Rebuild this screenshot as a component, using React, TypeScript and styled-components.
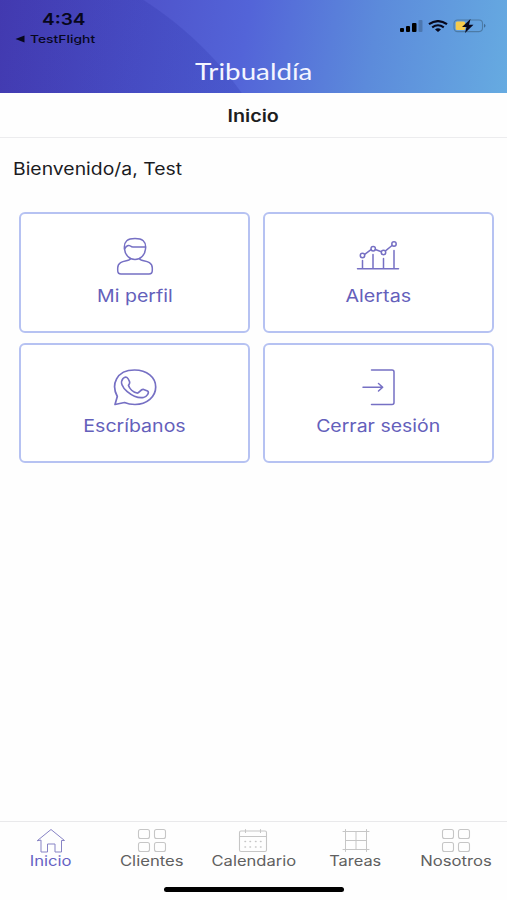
import React from "react";
import styled, { createGlobalStyle } from "styled-components";

const GlobalStyle = createGlobalStyle`
  * { box-sizing: border-box; }
  body { margin: 0; background: #fff; font-family: Inter, "Liberation Sans", sans-serif; }
`;

const Screen = styled.main`
  width: 507px;
  height: 900px;
  display: flex;
  flex-direction: column;
  background: #fefefe;
  overflow: hidden;
`;

const Header = styled.header`
  height: 93px;
  flex: none;
  display: flex;
  flex-direction: column;
  background:
    radial-gradient(circle 360px at -50px 303px, rgba(30, 36, 155, 0.18) 99.7%, transparent 100%),
    linear-gradient(100deg, #4a3eb4 0%, #4f54cb 28%, #5364d8 48%, #5c8bdb 73%, #66abe1 100%);
`;

const StatusBar = styled.div`
  height: 51px;
  display: flex;
  justify-content: space-between;
  padding: 9px 21px 0 15px;
  color: #07071c;
`;

const StatusLeft = styled.div`
  display: flex;
  flex-direction: column;
`;

const StatusIcons = styled.div`
  display: flex;
  align-items: center;
  gap: 5px;
  height: 34px;
`;

const Wide = styled.span<{ $scale?: number; $from?: string }>`
  display: inline-block;
  white-space: nowrap;
  transform: scaleX(${(p) => p.$scale ?? 1.2});
  transform-origin: ${(p) => p.$from ?? "center"};
`;

const Clock = styled.div`
  padding-left: 27px;
  font-size: 16px;
  line-height: 20px;
  font-weight: 600;
`;

const BackLink = styled.div`
  display: flex;
  align-items: center;
  gap: 5px;
  font-size: 11px;
  line-height: 20px;
  font-weight: 500;
`;

const AppTitle = styled.div`
  height: 40px;
  text-align: center;
  font-family: Lato, sans-serif;
  font-size: 23.5px;
  line-height: 40px;
  color: #f4f5ff;
`;

const PageTitle = styled.h1`
  margin: 0;
  height: 45px;
  flex: none;
  border-bottom: 1px solid #ececee;
  text-align: center;
  font-size: 17px;
  line-height: 46px;
  font-weight: 600;
  color: #1d1d20;
`;

const Welcome = styled.p`
  margin: 0;
  padding: 18px 0 0 13px;
  height: 74px;
  flex: none;
  font-size: 17px;
  line-height: 26px;
  color: #1b1b1f;
`;

const CardGrid = styled.section`
  display: grid;
  grid-template-columns: 231px 231px;
  grid-auto-rows: 120.5px;
  gap: 10px 12.5px;
  padding-left: 19px;
  flex: 1;
`;

const Card = styled.button`
  display: flex;
  flex-direction: column;
  align-items: center;
  padding: 20px 0 0;
  border: 2px solid #b6c2f2;
  border-radius: 6px;
  background: #fff;
  color: #6460bb;
  font: 400 17px/24px Inter, sans-serif;
  svg { margin-bottom: 5.5px; flex: none; color: #7670c4; }
`;

const TabBar = styled.nav`
  height: 54px;
  flex: none;
  display: grid;
  grid-template-columns: repeat(5, 101.4px);
  border-top: 1px solid #e9e9eb;
`;

const Tab = styled.a<{ $active?: boolean }>`
  display: flex;
  flex-direction: column;
  align-items: center;
  padding-top: 6px;
  font-size: 14px;
  line-height: 16px;
  font-weight: 400;
  color: ${(p) => (p.$active ? "#6562c4" : "#606060")};
  svg { color: ${(p) => (p.$active ? "#8783c5" : "#c6c6c6")}; flex: none; }
`;

const HomeArea = styled.footer`
  height: 25px;
  flex: none;
  display: flex;
  justify-content: center;
  padding: 12px 0 0 1px;
`;

const HomeIndicator = styled.div`
  width: 180px;
  height: 5px;
  border-radius: 3px;
  background: #000;
`;

const line = { fill: "none", stroke: "currentColor", strokeLinecap: "round", strokeLinejoin: "round" } as const;

const SignalIcon = () => (
  <svg width="23" height="12" viewBox="0 0 23 12">
    <rect x="0" y="8" width="4" height="4" rx="1" />
    <rect x="6" y="6" width="4" height="6" rx="1" />
    <rect x="12" y="3" width="4.5" height="9" rx="1" />
    <rect x="18.5" y="0" width="4" height="12" rx="1" opacity="0.2" />
  </svg>
);

const WifiIcon = () => (
  <svg width="20" height="12" viewBox="0 0 20 12" fill="none" stroke="currentColor" strokeWidth="2.2">
    <path d="M1 4.2Q10-2 19 4.2M4.2 7.3Q10 3.2 15.8 7.3" />
    <path d="M7 9.4Q10 7.3 13 9.4L10 12Z" fill="currentColor" stroke="none" />
  </svg>
);

const BatteryIcon = () => (
  <svg width="33" height="14" viewBox="0 0 33 14">
    <rect x="1" y="1" width="28.5" height="11.6" rx="3.5" fill="none" stroke="#4c7ba6" strokeWidth="1.1" />
    <path d="M31 4.8q3 2 0 4Z" fill="#416b94" />
    <rect x="2.7" y="2.6" width="9.5" height="8.4" rx="1.5" fill="#f5cb4d" />
    <path d="M17.5 0 9 8H13.5L12 14 20.5 5.8H16Z" fill="#07071c" />
  </svg>
);

const PersonIcon = () => (
  <svg width="44" height="44" viewBox="0 0 44 44" {...line} strokeWidth="1.5">
    <path d="M11.5 15C10.5 7 15 4.5 22 4.5S33.5 7 32.5 15C32 21 27.5 25.5 22 25.5S12 21 11.5 15Z" />
    <path d="M11.5 15Q14.5 10 17.5 12Q18.5 13 20 13H32.5" />
    <path d="M17.5 24.5C17.5 28 4.7 25 4.7 34V36.5Q4.7 40 8 40H36Q39.3 40 39.3 36.5V34C39.3 25 26.5 28 26.5 24.5" />
  </svg>
);

const ChartIcon = () => (
  <svg width="44" height="44" viewBox="0 0 44 44" {...line} strokeWidth="1.5">
    <path d="M1.5 34.7H42.5M6.5 34V26.5M17 34V20.5M27.5 34V24.5M38 34V16.5" />
    <path d="M8.7 20.3 15 15.6M19.3 15.5 25.4 17.7M29.5 16.8 36 11.5" />
    <circle cx="6.5" cy="21.5" r="2.2" />
    <circle cx="17.2" cy="14.7" r="2.2" />
    <circle cx="27.5" cy="18.5" r="2.2" />
    <circle cx="38" cy="10" r="2.2" />
  </svg>
);

const PhoneBubbleIcon = () => (
  <svg width="44" height="44" viewBox="0 0 44 44" {...line} strokeWidth="1.7">
    <path d="M2 39.5 4.3 31.5C-2 20 3 5 21.5 5C34 5 42.7 12.3 42.7 22S34 39.5 22 39.5Q16 39.5 11.5 37.5Z" />
    <path d="M10 13.5C13 10.5 15 12.5 16.5 16.5C17.5 19 15.5 19.5 15.5 20.5C16.5 23.5 20 27 24 28C26 28.5 27.5 24.3 30 24.3L34.5 26C37 27.5 33.5 32 30.5 32.5C21 34 3.5 21.5 10 13.5Z" />
  </svg>
);

const ExitIcon = () => (
  <svg width="44" height="44" viewBox="0 0 44 44" {...line} strokeWidth="1.5">
    <path d="M15.5 5H36Q38 5 38 7V37.5Q38 39.5 36 39.5H15.5M7 22.2H26.5M22.5 18.5 26.7 22.2 22.5 26" />
  </svg>
);

const HouseIcon = () => (
  <svg width="30" height="25" viewBox="0 0 30 25" {...line} strokeWidth="1">
    <path d="M1.5 12.5 15 1.5 28.5 12.5H25.5V24H19V16H11.5V24H5V12.5Z" />
  </svg>
);

const TilesIcon = () => (
  <svg width="30" height="25" viewBox="0 0 30 25" {...line} strokeWidth="1.1">
    <rect x="1.5" y="1.5" width="11" height="9" rx="2" />
    <rect x="17.5" y="1.5" width="11" height="9" rx="2" />
    <rect x="1.5" y="14.5" width="11" height="9" rx="2" />
    <rect x="17.5" y="14.5" width="11" height="9" rx="2" />
  </svg>
);

const CalendarIcon = () => (
  <svg width="30" height="25" viewBox="0 0 30 25" {...line} strokeWidth="1.1">
    <rect x="1.5" y="3" width="27" height="20.5" rx="1.5" />
    <path d="M1.5 8.5H28.5M7.5 1.5V4.5M22.5 1.5V4.5" />
    <path d="M7 13.5h.5M12 13.5h.5M17.5 13.5h.5M22.5 13.5h.5M7 19h.5M12 19h.5M17.5 19h.5M22.5 19h.5" strokeWidth="1.5" />
  </svg>
);

const GridIcon = () => (
  <svg width="30" height="25" viewBox="0 0 30 25" {...line} strokeWidth="1">
    <path d="M5.5 1.5V23.5M26.5 1.5V23.5M3 3.5H29M3 21.5H29M16 3.5V21.5M5.5 12.5H26.5" />
  </svg>
);

const cards = [
  { label: "Mi perfil", Icon: PersonIcon, scale: 1.15 },
  { label: "Alertas", Icon: ChartIcon, scale: 1.16 },
  { label: "Escríbanos", Icon: PhoneBubbleIcon, scale: 1.15 },
  { label: "Cerrar sesión", Icon: ExitIcon, scale: 1.145 },
];

const tabs = [
  { label: "Inicio", Icon: HouseIcon, scale: 1.19 },
  { label: "Clientes", Icon: TilesIcon, scale: 1.19 },
  { label: "Calendario", Icon: CalendarIcon, scale: 1.18 },
  { label: "Tareas", Icon: GridIcon, scale: 1.17 },
  { label: "Nosotros", Icon: TilesIcon, scale: 1.19 },
];

export default function App() {
  return (
    <Screen>
      <GlobalStyle />
      <Header>
        <StatusBar>
          <StatusLeft>
            <Clock><Wide $from="left" $scale={1.19}>4:34</Wide></Clock>
            <BackLink>
              <svg width="10" height="8" viewBox="0 0 10 8" fill="currentColor"><path d="M.5 4 9.5.5V7.5Z" /></svg>
              <Wide $from="left" $scale={1.26}>TestFlight</Wide>
            </BackLink>
          </StatusLeft>
          <StatusIcons><SignalIcon /><WifiIcon /><BatteryIcon /></StatusIcons>
        </StatusBar>
        <AppTitle><Wide $scale={1.18}>Tribualdía</Wide></AppTitle>
      </Header>
      <PageTitle><Wide $scale={1.16}>Inicio</Wide></PageTitle>
      <Welcome><Wide $from="left" $scale={1.14}>Bienvenido/a, Test</Wide></Welcome>
      <CardGrid>
        {cards.map(({ label, Icon, scale }) => (
          <Card key={label}><Icon /><Wide $scale={scale}>{label}</Wide></Card>
        ))}
      </CardGrid>
      <TabBar>
        {tabs.map(({ label, Icon, scale }, i) => (
          <Tab key={label} $active={i === 0}><Icon /><Wide $scale={scale}>{label}</Wide></Tab>
        ))}
      </TabBar>
      <HomeArea><HomeIndicator /></HomeArea>
    </Screen>
  );
}
